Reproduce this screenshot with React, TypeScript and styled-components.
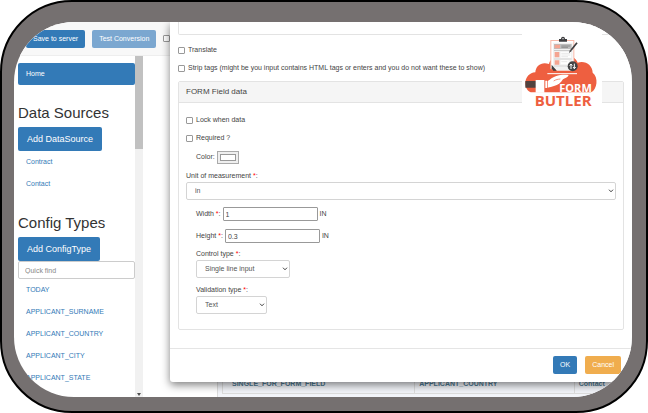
import React from "react";
import styled, { createGlobalStyle } from "styled-components";

const GlobalStyle = createGlobalStyle`
  *, *::before, *::after { box-sizing: border-box; }
  body { margin: 0; background: #fff; }
  body, button, input, select {
    font-family: "Liberation Sans", Arial, sans-serif;
    font-size: 7px;
    line-height: 10px;
    color: #444;
  }
`;

const Frame = styled.div`
  display: flex;
  height: 100vh;
  padding: 20px 14px 14px 12px;
  border: 2px solid #000;
  border-radius: 72px;
  background: #757070;
`;

const Screen = styled.div`
  position: relative;
  flex: 1;
  min-width: 0;
  display: flex;
  flex-direction: column;
  overflow: hidden;
  border-radius: 60px;
  background: #fff;
`;

const Toolbar = styled.header`
  display: flex;
  flex: none;
  align-items: center;
  gap: 7px;
  height: 34px;
  padding-left: 12px;
  background: #f8f8f8;
  border-bottom: 1px solid #eee;
`;

const tones = { primary: "#337ab7", muted: "#7ba7d0", warning: "#f0ad4e" };

const Button = styled.button<{ $tone?: keyof typeof tones; $large?: boolean }>`
  flex: none;
  height: ${(p) => (p.$large ? 24 : 18)}px;
  padding: 0 ${(p) => (p.$large ? 9 : 7)}px;
  border: 0;
  border-radius: 2px;
  background: ${(p) => tones[p.$tone ?? "primary"]};
  color: #fff;
  font-size: ${(p) => (p.$large ? 9 : 7)}px;
`;

const CheckBox = styled.input.attrs({ type: "checkbox" })`
  appearance: none;
  flex: none;
  width: 7px;
  height: 7px;
  margin: 0;
  border: 1px solid #999;
  border-radius: 1px;
  background: #fff;
  &:checked { background: #337ab7; }
`;

const Workspace = styled.div`
  flex: 1;
  min-height: 0;
  display: flex;
`;

const Sidebar = styled.aside`
  flex: none;
  width: 121px;
  padding: 7px 0 0 4px;
`;

const NavLink = styled.a<{ $active?: boolean }>`
  display: flex;
  align-items: center;
  height: 22px;
  padding-left: 8px;
  border-radius: 2px;
  background: ${(p) => (p.$active ? "#337ab7" : "transparent")};
  color: ${(p) => (p.$active ? "#fff" : "#337ab7")};
  text-decoration: none;
`;

const Heading = styled.h2`
  margin: 19px 0 5px;
  font-size: 15px;
  font-weight: 400;
  line-height: 18px;
  color: #333;
`;

const LinkGroup = styled.nav`
  display: flex;
  flex-direction: column;
`;

const Section = styled.section`
  display: flex;
  flex-direction: column;
  align-items: stretch;
  & > button { align-self: flex-start; }
`;

const QuickFind = styled.input`
  width: 100%;
  height: 18px;
  padding: 0 6px;
  border: 1px solid #ccc;
  border-radius: 2px;
  background: #fff;
  &::placeholder { color: #888; opacity: 1; }
`;

const Scrollbar = styled.div`
  display: flex;
  flex: none;
  flex-direction: column;
  justify-content: space-between;
  align-items: center;
  width: 8px;
  background: #f1f1f1;
`;

const Thumb = styled.div`
  width: 100%;
  height: 93px;
  background: #c1c1c1;
`;

const Main = styled.main`
  flex: 1;
  min-width: 0;
  display: flex;
  align-items: flex-end;
  padding-left: 74px;
`;

const TableWrap = styled.div`
  flex: 1;
  padding: 0 0 3px 4px;
  border-left: 1px solid #ddd;
  background: #f3f5fa;
`;

const Table = styled.table`
  width: 100%;
  table-layout: fixed;
  border-collapse: collapse;
  td {
    height: 20px;
    padding: 0 4px 0 9px;
    border: 1px solid #ddd;
    color: #4f7b94;
    font-weight: 700;
    white-space: nowrap;
  }
  td:nth-child(1) { width: 47%; }
  td:nth-child(2) { width: 39%; padding-left: 4px; }
  td:nth-child(3) { padding-left: 4px; }
`;

const Dialog = styled.div`
  position: absolute;
  inset: 0 0 auto 156px;
  border-radius: 0 0 3px 3px;
  background: #fff;
  box-shadow: 0 3px 8px rgba(0, 0, 0, 0.5);
`;

const DialogBody = styled.div`
  display: flex;
  flex-direction: column;
  padding: 0 8px 18px;
`;

const PreviousField = styled.div`
  height: 13px;
  margin-bottom: 6px;
  border: 1px solid #e3e3e3;
  border-top: 0;
  border-radius: 0 0 2px 2px;
`;

const CheckRow = styled.label`
  display: flex;
  align-items: center;
  gap: 3px;
  height: 18px;
`;

const Panel = styled.fieldset`
  min-width: 0;
  margin: 4px 0 0;
  padding: 0;
  border: 1px solid #e3e3e3;
  border-radius: 2px;
`;

const PanelTitle = styled.div`
  height: 21px;
  padding-left: 7px;
  border-bottom: 1px solid #e3e3e3;
  background: #f5f5f5;
  font-size: 8px;
  line-height: 20px;
`;

const PanelBody = styled.div`
  display: flex;
  flex-direction: column;
  padding: 8px 7px 10px;
`;

const FieldRow = styled.div<{ $height?: number }>`
  display: flex;
  align-items: center;
  gap: 2px;
  height: ${(p) => p.$height ?? 22}px;
  padding-left: 10px;
`;

const FieldBlock = styled.div<{ $indent?: boolean }>`
  display: flex;
  flex-direction: column;
  align-items: ${(p) => (p.$indent ? "flex-start" : "stretch")};
  gap: 1px;
  margin: ${(p) => (p.$indent ? "2px 0 5px" : "4px 0 3px")};
  padding-left: ${(p) => (p.$indent ? 10 : 0)}px;
`;

const Star = styled.span`
  color: #f00;
`;

const ColorInput = styled.input.attrs({ type: "color" })`
  width: 22px;
  height: 13px;
  margin: 0;
  padding: 2px;
  border: 1px solid #aaa;
  background: #efefef;
  &::-webkit-color-swatch-wrapper { padding: 0; }
  &::-webkit-color-swatch { border: 1px solid #999; }
`;

const NumberBox = styled.input`
  width: 95px;
  height: 14px;
  padding: 0 2px;
  border: 1px solid #999;
  border-radius: 1px;
`;

const SelectWrap = styled.div<{ $width: string }>`
  position: relative;
  width: ${(p) => p.$width};
  svg {
    position: absolute;
    right: 2px;
    top: 7px;
    pointer-events: none;
  }
`;

const Select = styled.select`
  display: block;
  appearance: none;
  width: 100%;
  height: 18px;
  padding: 0 8px;
  border: 1px solid #d4d4d4;
  border-radius: 2px;
  background: #fff;
  color: #555;
`;

const DialogFooter = styled.footer`
  display: flex;
  justify-content: flex-end;
  gap: 8px;
  padding: 7px 11px 8px;
  border-top: 1px solid #e5e5e5;
`;

const LogoBadge = styled.div`
  position: absolute;
  top: 12px;
  right: 30px;
  background: #fff;
  svg { display: block; }
`;

function Dropdown({ id, width, options }: { id: string; width: string; options: string[] }) {
  return (
    <SelectWrap $width={width}>
      <Select id={id}>
        {options.map((o) => (
          <option key={o}>{o}</option>
        ))}
      </Select>
      <svg width="6" height="4" viewBox="0 0 6 4" fill="none" stroke="#444" strokeWidth="1">
        <path d="M1 .7 3 2.8 5 .7" />
      </svg>
    </SelectWrap>
  );
}

function Required({ htmlFor, text }: { htmlFor: string; text: string }) {
  return (
    <label htmlFor={htmlFor}>
      {text} <Star>*</Star>:
    </label>
  );
}

function Logo() {
  return (
    <svg width="80" height="84" viewBox="36 27 240 252" role="img" aria-label="Form Butler">
      <path
        fill="#ee5f40"
        d="M62 202C38 192 40 145 76 142C77 121 96 109 117 117C122 85 193 80 203 113C226 105 248 121 248 143C266 157 262 193 243 202Z"
      />
      <path fill="#f9b9a9" d="M121 45h72v88h-72z" />
      <path fill="#fff" d="M124 48h66v82h-66z" />
      <path fill="#f1f1f1" d="M129 53h59v84h-48l-11-14z" />
      <path fill="#bdbdbd" d="M132 57h53v15h-53zM132 76h53v2h-53zM132 101h53v2h-53zM132 122h40v2h-40z" />
      <path fill="#f5a491" d="M134 59h16v11h-16zM134 81h14v16h-14zM134 106h14v13h-14z" />
      <path fill="#fff" d="M152 81h31v17h-31zM152 106h24v12h-24z" />
      <path stroke="#777" strokeWidth="2" d="M154 63h27M154 67h20" />
      <path stroke="#ddd" strokeWidth="2" d="M154 85h27M154 90h27M154 95h20M154 110h18" />
      <path fill="#3d3d3f" d="m125 119 15 18h-10l-5-7z" />
      <path fill="#3d3d3f" d="M147 50v-8h6c0-9 12-9 12 0h6v8z" />
      <circle cx="159" cy="41" r="2" fill="#fff" />
      <path stroke="#3d3d3f" strokeWidth="5" d="m201 53-18 23" />
      <path fill="#3d3d3f" d="m180 74 5 4-8 6z" />
      <circle cx="188" cy="124" r="15" fill="#444446" />
      <path fill="none" stroke="#fff" strokeWidth="3" d="M183 132v-15m-4 5 4-5 4 5M193 116v15m-4-5 4 5 4-5" />
      <path stroke="#fff" strokeWidth="3" d="M112 146h89" />
      <path fill="#51423f" d="M46 168h32v20h-32z" />
      <path fill="#fff" d="M77 165h26v38h-26zM106 167h5v22h-5z" />
      <path
        fill="#fff"
        d="M113 168c9-5 14-11 24-14 14-5 25-5 39-4-3 8-12 10-17 13-7 11-15 18-27 20-7 2-12 4-19 5z"
      />
      <path fill="none" stroke="#ee5f40" strokeWidth="2" d="M131 168c8-5 12-5 20-6" />
      <g fontFamily="'Open Sans', sans-serif" fontWeight="700">
        <text x="148" y="201" fontSize="33" fill="#fff">FORM</text>
        <text x="74" y="243" fontSize="45" fill="#ee5f40">BUTLER</text>
      </g>
    </svg>
  );
}

const sources = ["Contract", "Contact"];
const configTypes = [
  "TODAY",
  "APPLICANT_SURNAME",
  "APPLICANT_COUNTRY",
  "APPLICANT_CITY",
  "APPLICANT_STATE",
];

export default function App() {
  return (
    <>
      <GlobalStyle />
      <Frame>
        <Screen>
          <Toolbar>
            <Button>Save to server</Button>
            <Button $tone="muted">Test Conversion</Button>
            <CheckBox aria-label="Conversion option" />
          </Toolbar>
          <Workspace>
            <Sidebar>
              <NavLink href="#home" $active>Home</NavLink>
              <Section>
                <Heading>Data Sources</Heading>
                <Button $large>Add DataSource</Button>
                <LinkGroup>
                  {sources.map((s) => (
                    <NavLink key={s} href={`#${s}`}>{s}</NavLink>
                  ))}
                </LinkGroup>
              </Section>
              <Section>
                <Heading>Config Types</Heading>
                <Button $large>Add ConfigType</Button>
                <QuickFind placeholder="Quick find" aria-label="Quick find" />
                <LinkGroup>
                  {configTypes.map((c) => (
                    <NavLink key={c} href={`#${c}`}>{c}</NavLink>
                  ))}
                </LinkGroup>
              </Section>
            </Sidebar>
            <Scrollbar>
              <Thumb />
              <svg width="8" height="4" viewBox="0 0 8 4">
                <path d="M2 0h4L4 3z" fill="#505050" />
              </svg>
            </Scrollbar>
            <Main>
              <TableWrap>
                <Table>
                  <tbody>
                    <tr>
                      <td>SINGLE_FOR_FORM_FIELD</td>
                      <td>APPLICANT_COUNTRY</td>
                      <td>Contact</td>
                    </tr>
                  </tbody>
                </Table>
              </TableWrap>
            </Main>
          </Workspace>

          <Dialog role="dialog" aria-label="Field settings">
            <DialogBody>
              <PreviousField />
              <CheckRow>
                <CheckBox /> Translate
              </CheckRow>
              <CheckRow>
                <CheckBox /> Strip tags (might be you input contains HTML tags or enters and you do
                not want these to show)
              </CheckRow>
              <Panel aria-label="FORM Field data">
                <PanelTitle>FORM Field data</PanelTitle>
                <PanelBody>
                  <CheckRow>
                    <CheckBox /> Lock when data
                  </CheckRow>
                  <CheckRow>
                    <CheckBox /> Required ?
                  </CheckRow>
                  <FieldRow $height={20}>
                    <label htmlFor="color">Color:</label>
                    <ColorInput id="color" defaultValue="#ffffff" />
                  </FieldRow>
                  <FieldBlock>
                    <Required htmlFor="unit" text="Unit of measurement" />
                    <Dropdown id="unit" width="100%" options={["in", "cm", "mm"]} />
                  </FieldBlock>
                  <FieldRow>
                    <Required htmlFor="width" text="Width" />
                    <NumberBox id="width" defaultValue="1" />
                    IN
                  </FieldRow>
                  <FieldRow>
                    <Required htmlFor="height" text="Height" />
                    <NumberBox id="height" defaultValue="0.3" />
                    IN
                  </FieldRow>
                  <FieldBlock $indent>
                    <Required htmlFor="control" text="Control type" />
                    <Dropdown id="control" width="94px" options={["Single line input", "Checkbox"]} />
                  </FieldBlock>
                  <FieldBlock $indent>
                    <Required htmlFor="validation" text="Validation type" />
                    <Dropdown id="validation" width="71px" options={["Text", "Number"]} />
                  </FieldBlock>
                </PanelBody>
              </Panel>
            </DialogBody>
            <DialogFooter>
              <Button>OK</Button>
              <Button $tone="warning">Cancel</Button>
            </DialogFooter>
          </Dialog>
          <LogoBadge>
            <Logo />
          </LogoBadge>
        </Screen>
      </Frame>
    </>
  );
}
